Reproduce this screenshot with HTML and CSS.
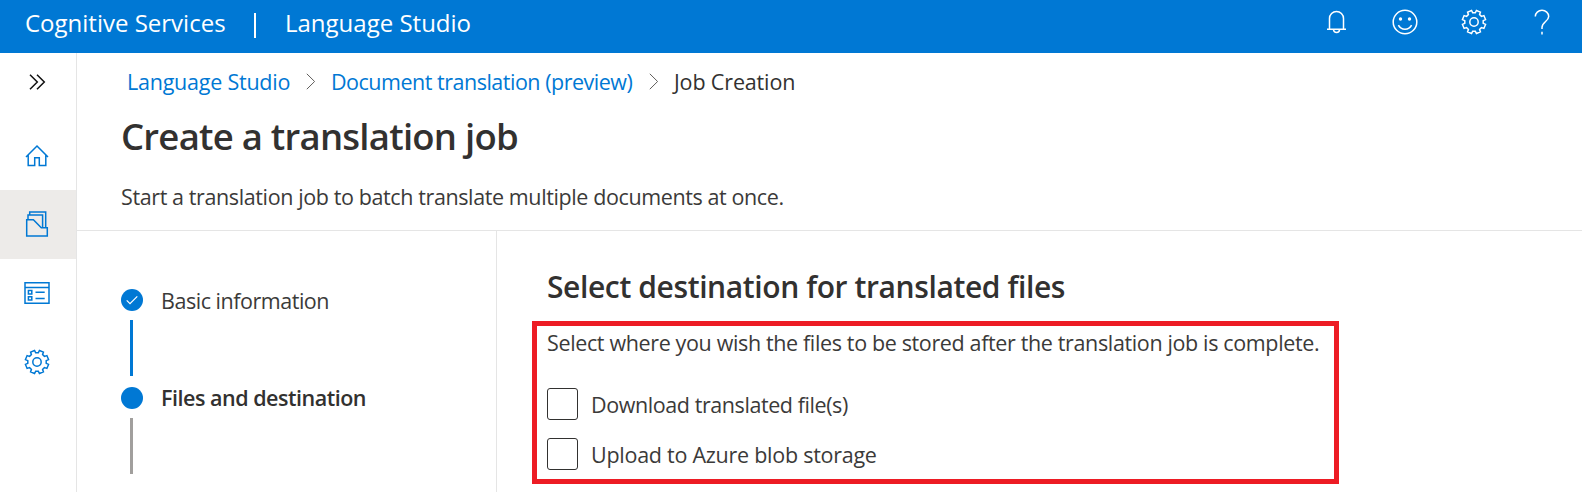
FILE: index.html
```
<!DOCTYPE html>
<html lang="en">
<head>
<meta charset="utf-8">
<title>Language Studio</title>
<link rel="stylesheet" href="styles.css">
</head>
<body>
<svg class="defs" width="0" height="0">
  <symbol id="gear" viewBox="-13 -13 26 26">
    <path d="M-1.3-9.2H1.3L2.45-11.55 6.43-9.9 5.6-7.43 7.43-5.6 9.9-6.43 11.55-2.45 9.2-1.3V1.3L11.55 2.45 9.9 6.43 7.43 5.6 5.6 7.43 6.43 9.9 2.45 11.55 1.3 9.2H-1.3L-2.45 11.55-6.43 9.9-5.6 7.43-7.43 5.6-9.9 6.43-11.55 2.45-9.2 1.3V-1.3L-11.55-2.45-9.9-6.43-7.43-5.6-5.6-7.43-6.43-9.9-2.45-11.55Z"/>
    <circle r="4.2"/>
  </symbol>
</svg>
<header class="topbar">
  <span class="brand">Cognitive Services</span>
  <span class="bar"></span>
  <span class="product">Language Studio</span>
  <div class="actions">
    <svg class="icon" viewBox="-13 -13 26 26"><path d="M-7.5 7.3V-3.5a7 7 0 0 1 14 0V7.3M-10 7.3H9M-3.5 7.5a3 3 0 0 0 6 0"/></svg>
    <svg class="icon" viewBox="-13 -13 26 26"><circle r="11.8"/><path d="M-6.6 3.2a7.4 7.4 0 0 0 13.2 0"/><circle class="dot" cx="-4.5" cy="-3" r="1.7"/><circle class="dot" cx="4.5" cy="-3" r="1.7"/></svg>
    <svg class="icon"><use href="#gear"/></svg>
    <svg class="icon" viewBox="-13 -13 26 26"><path d="M-6.7-5.5a6.7 6.2 0 0 1 13.4 0C6.7-1 0 .2 0 5.5V7M0 9.8V12.4"/></svg>
  </div>
</header>
<div class="shell">
  <nav class="rail">
    <a class="toggle"><svg class="icon" viewBox="-13 -13 26 26"><path d="M-7-7.3.3 0-7 7.3M0-7.3 7.3 0 0 7.3"/></svg></a>
    <a class="item"><svg class="icon" viewBox="-13 -13 26 26"><path d="M-11 2 0-9 11 2M-8.8 0V10.6H-2.3V2.8H2.3V10.6H8.8V0"/></svg></a>
    <a class="item on"><svg class="icon" viewBox="-13 -13 26 26"><path d="M-7.3-9V-12H8.7V3.7M-9-4V-9H5.6V3.7M-10.3-4.2H-3.6L4.3 3.8H10.3V12H-10.3Z"/></svg></a>
    <a class="item"><svg class="icon" viewBox="-13 -13 26 26"><path d="M-12-10.3H12V10.3H-12ZM-12-5.5H12M-8.6-2.5H-5.2V.9H-8.6ZM-8.6 3.7H-5.2V7.1H-8.6ZM-1.5-.8H7.7M-1.5 5.4H7.7"/></svg></a>
    <a class="item"><svg class="icon"><use href="#gear"/></svg></a>
  </nav>
  <main class="main">
    <div class="head">
      <div class="crumbs">
        <a class="c1">Language Studio</a>
        <svg class="sep" viewBox="0 0 10 17"><path d="M.8.8 8.6 8.5.8 16.2"/></svg>
        <a class="c2">Document translation (preview)</a>
        <svg class="sep" viewBox="0 0 10 17"><path d="M.8.8 8.6 8.5.8 16.2"/></svg>
        <span class="c3">Job Creation</span>
      </div>
      <h1>Create a translation job</h1>
      <p class="sub">Start a translation job to batch translate multiple documents at once.</p>
    </div>
    <div class="body">
      <div class="steps">
        <div class="step">
          <div class="track"><svg class="disc" viewBox="-11 -11 22 22"><circle r="11"/><path d="M-5.3.4-2 3.6 5.3-3.7"/></svg><i class="line done"></i></div>
          <span class="s1">Basic information</span>
        </div>
        <div class="step">
          <div class="track"><svg class="disc" viewBox="-11 -11 22 22"><circle r="11"/></svg><i class="line"></i></div>
          <span class="s2">Files and destination</span>
        </div>
      </div>
      <section class="panel">
        <h2>Select destination for translated files</h2>
        <div class="marked">
          <p class="desc">Select where you wish the files to be stored after the translation job is complete.</p>
          <label class="opt"><i class="box"></i><span class="o1">Download translated file(s)</span></label>
          <label class="opt"><i class="box"></i><span class="o2">Upload to Azure blob storage</span></label>
        </div>
      </section>
    </div>
  </main>
</div>
</body>
</html>
```
FILE: styles.css
```
* { box-sizing: border-box; }
body { margin: 0; height: 492px; overflow: hidden; background: #fff; color: #3b3a39; font: 21.5px/30px "Segoe UI", "Open Sans", "Noto Sans", sans-serif; }
h1, h2, p { margin: 0; }
h1, h2 { color: #323130; }
.defs { position: absolute; }
.icon { width: 26px; height: 26px; fill: none; stroke: currentColor; stroke-width: 1.5; display: block; }
.topbar { height: 53px; background: #0078d4; color: #fff; display: flex; align-items: center; padding: 0 27px 0 25px; font-size: 24px; }
.brand, .product { white-space: nowrap; line-height: 32px; padding-bottom: 7px; }
.brand { width: 229px; }
.bar { width: 2px; height: 25px; background: #fff; margin-bottom: 2px; }
.product { margin-left: 29px; }
.actions { margin-left: auto; display: flex; gap: 42.5px; padding-bottom: 10px; }
.actions .dot { fill: #fff; stroke: none; }
.shell { display: flex; height: 439px; }
.rail { width: 77px; border-right: 1px solid #e5e5e5; color: #0078d4; flex: none; }
.rail a { display: flex; align-items: center; justify-content: center; height: 69px; padding: 0 3px 1px 0; }
.rail .toggle { height: 58px; margin-bottom: 10px; color: #111; padding-bottom: 0; }
.rail .on { background: #edebe9; }
.main { flex: 1; min-width: 0; display: flex; flex-direction: column; }
.head { height: 178px; border-bottom: 1px solid #e5e5e5; padding: 14px 0 0 44px; white-space: nowrap; }
.crumbs { display: flex; height: 30px; align-items: center; padding-left: 6px; color: #0078d4; }
.sep { width: 10px; height: 17px; margin-bottom: 2px; fill: none; stroke: #605e5c; stroke-width: 1; }
.c1 { width: 179px; letter-spacing: -.23px; }
.c2 { width: 318px; margin-left: 15px; letter-spacing: -.49px; }
.c3 { margin-left: 15px; letter-spacing: -.15px; color: #323130; }
h1 { font-size: 36.5px; line-height: 50px; font-weight: 600; letter-spacing: -.76px; margin-top: 14px; }
.sub { margin-top: 21px; letter-spacing: -.39px; }
.body { flex: 1; display: flex; white-space: nowrap; }
.steps { width: 420px; border-right: 1px solid #e5e5e5; padding: 58px 0 0 44px; }
.step { display: flex; height: 98px; gap: 18px; }
.step span { margin-top: -3px; }
.track { width: 22px; }
.disc { width: 22px; height: 22px; fill: #0078d4; display: block; }
.disc path { fill: none; stroke: #fff; stroke-width: 1.2; }
.line { display: block; width: 3px; height: 56px; margin: 9px 0 0 9px; background: #a19f9d; }
.line.done { background: #0078d4; }
.s1 { letter-spacing: -.47px; }
.step .s2 { font-weight: 600; letter-spacing: -.48px; color: #323130; margin-top: -4px; }
.panel { padding: 36px 0 0 35px; }
h2 { font-size: 30px; line-height: 40px; font-weight: 600; letter-spacing: -.39px; padding-left: 15px; }
.marked { width: 807px; height: 163px; border: 5px solid #ed1c24; margin-top: 14px; padding: 2px 0 0 10px; }
.desc { height: 60px; letter-spacing: -.36px; }
.opt { display: flex; height: 32px; margin-bottom: 18px; align-items: center; }
.opt span { padding-top: 2px; }
.box { width: 31px; height: 32px; border: 1.5px solid #323130; border-radius: 3px; margin-right: 13px; }
.o1 { letter-spacing: -.42px; }
.o2 { letter-spacing: -.26px; }
```
